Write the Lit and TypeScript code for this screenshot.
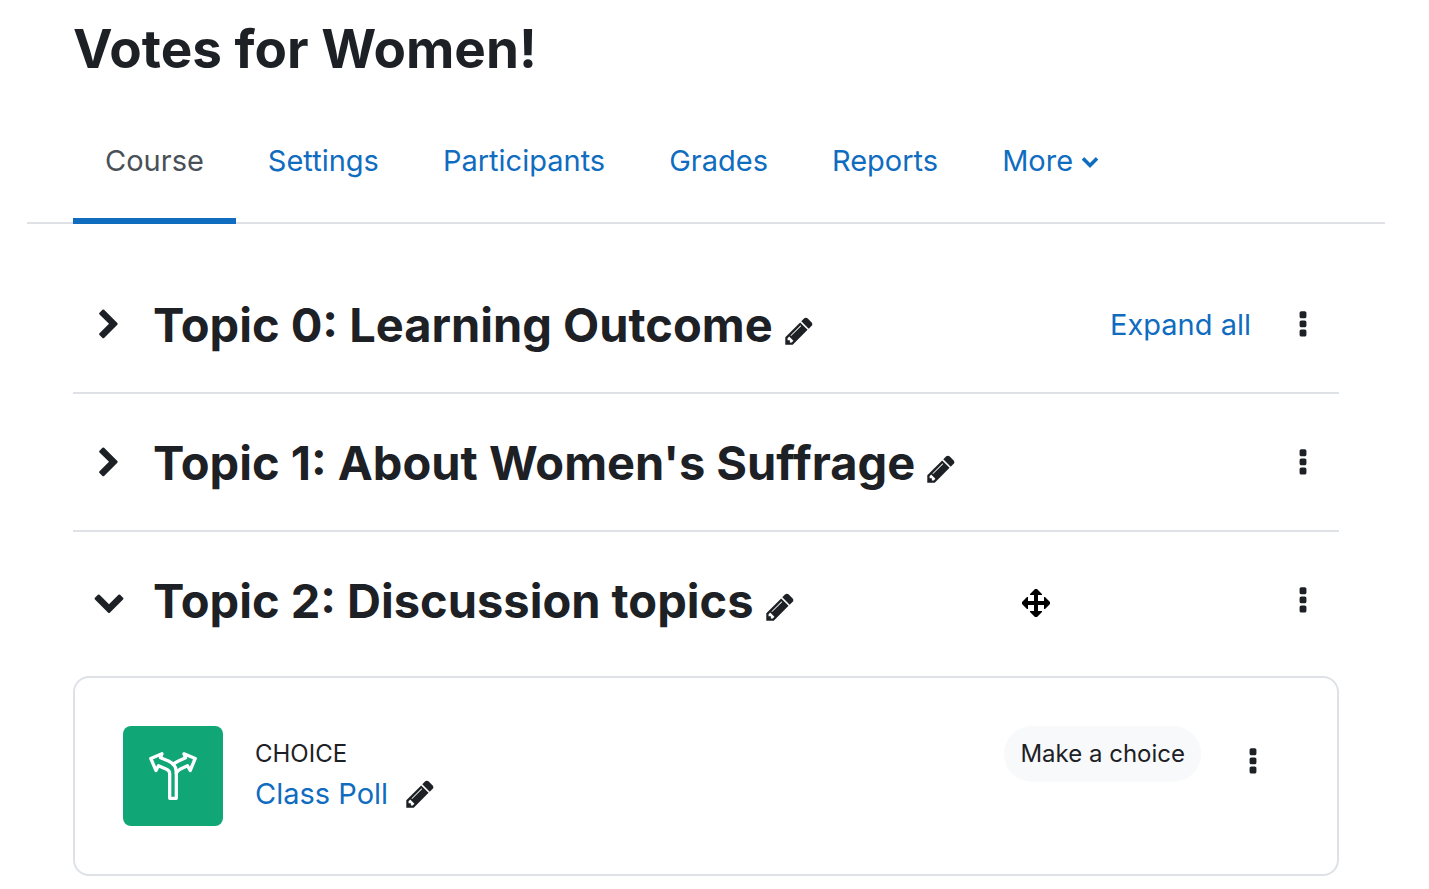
import { LitElement, html, css, svg } from "lit";
import { customElement, property, state } from "lit/decorators.js";
import { classMap } from "lit/directives/class-map.js";

const ICONS = {
  "chevron-right":
    "M1363 877l-742 742q-19 19-45 19t-45-19l-166-166q-19-19-19-45t19-45l531-531-531-531q-19-19-19-45t19-45l166-166q19-19 45-19t45 19l742 742q19 19 19 45t-19 45z",
  "chevron-down":
    "M1683 808l-742 741q-19 19-45 19t-45-19l-742-741q-19-19-19-45.5t19-45.5l166-165q19-19 45-19t45 19l531 531 531-531q19-19 45-19t45 19l166 165q19 19 19 45.5t-19 45.5z",
  pencil:
    "M491 1536l91-91-235-235-91 91v107h128v128h107zm523-928q0-22-22-22-10 0-17 7l-542 542q-7 7-7 17 0 22 22 22 10 0 17-7l542-542q7-7 7-17zm-54-192l416 416-832 832h-416v-416zm683 96q0 53-37 90l-166 166-416-416 166-165q36-38 90-38 53 0 91 38l235 234q37 39 37 91z",
  "ellipsis-v":
    "M1088 1248v192q0 40-28 68t-68 28h-192q-40 0-68-28t-28-68v-192q0-40 28-68t68-28h192q40 0 68 28t28 68zm0-512v192q0 40-28 68t-68 28h-192q-40 0-68-28t-28-68v-192q0-40 28-68t68-28h192q40 0 68 28t28 68zm0-512v192q0 40-28 68t-68 28h-192q-40 0-68-28t-28-68v-192q0-40 28-68t68-28h192q40 0 68 28t28 68z",
};

@customElement("ui-icon")
class UiIcon extends LitElement {
  @property() name: keyof typeof ICONS = "pencil";

  static styles = css`
    :host {
      display: inline-flex;
      width: 32px;
      height: 32px;
    }
    .glyph {
      width: 100%;
      height: 100%;
      fill: currentColor;
    }
  `;

  render() {
    return html`<svg class="glyph" viewBox="0 0 1792 1792" aria-hidden="true">
      ${svg`<path d=${ICONS[this.name]}></path>`}
    </svg>`;
  }
}

interface Topic {
  title: string;
  open: boolean;
}

@customElement("app-root")
class AppRoot extends LitElement {
  @state() private topics: Topic[] = [
    { title: "Topic 0: Learning Outcome", open: false },
    { title: "Topic 1: About Women's Suffrage", open: false },
    { title: "Topic 2: Discussion topics", open: true },
  ];

  static styles = css`
    :host {
      display: block;
      position: relative;
      box-sizing: border-box;
      padding: 0 44px 0 27px;
      background: #fff;
      color: #1d2125;
      font: 400 29px/44px Inter, "Liberation Sans", sans-serif;
    }
    *,
    *::before,
    *::after {
      box-sizing: border-box;
    }
    h1,
    h2,
    ul,
    p {
      margin: 0;
      padding: 0;
    }
    ul {
      list-style: none;
    }
    a {
      color: #0f6cbf;
      text-decoration: none;
    }
    button {
      display: inline-flex;
      align-items: center;
      padding: 0;
      border: 0;
      background: none;
      color: inherit;
      font: inherit;
      cursor: pointer;
    }
    .title {
      padding: 15px 46px 0;
      font-size: 53px;
      line-height: 68px;
      font-weight: 700;
    }
    .tabs {
      display: flex;
      margin-top: 15px;
      padding: 0 46px;
      border-bottom: 2px solid #dee2e6;
    }
    .tab {
      display: flex;
      align-items: center;
      gap: 8px;
      height: 126px;
      margin-bottom: -2px;
      padding: 5px 32px 0;
      border-bottom: 6px solid transparent;
      color: #0f6cbf;
    }
    .tab.active {
      border-color: #0f6cbf;
      color: #495057;
    }
    .caret {
      width: 18px;
      height: 18px;
    }
    .course {
      padding: 32px 46px 0;
    }
    .topic + .topic {
      border-top: 2px solid #dee2e6;
    }
    .bar {
      display: flex;
      align-items: center;
      height: 136px;
      padding: 1px 20px 0 0;
    }
    .toggle {
      width: 80px;
      padding-left: 20px;
    }
    .heading {
      font-size: 47px;
      line-height: 60px;
      font-weight: 700;
    }
    .edit {
      margin: 12px 0 0 10px;
    }
    .tools {
      display: flex;
      align-items: center;
      gap: 36px;
      margin-left: auto;
    }
    .card {
      display: flex;
      align-items: flex-start;
      gap: 32px;
      min-height: 200px;
      margin-top: 8px;
      padding: 48px;
      border: 2px solid #dee2e6;
      border-radius: 16px;
    }
    .badge {
      display: flex;
      padding: 25px;
      border-radius: 8px;
      background: #11a676;
    }
    .badge svg {
      width: 50px;
      height: 50px;
    }
    .kind {
      margin-top: 8px;
      font-size: 24px;
      line-height: 40px;
    }
    .name {
      display: flex;
      align-items: center;
      gap: 16px;
      line-height: 40px;
    }
    .pill {
      margin-left: auto;
      height: 56px;
      padding: 0 16px;
      border-radius: 28px;
      background: #f8f9fa;
      font-size: 24px;
    }
    .card-menu {
      margin: 20px 20px 0 4px;
    }
    .move {
      position: absolute;
      left: 1020px;
      top: 587px;
      width: 32px;
      height: 32px;
    }
  `;

  private toggle(index: number) {
    this.topics = this.topics.map((t, i) => (i === index ? { ...t, open: !t.open } : t));
  }

  private expandAll() {
    this.topics = this.topics.map((t) => ({ ...t, open: true }));
  }

  private renderChoice() {
    return html`<article class="card">
      <span class="badge">
        <svg viewBox="0 0 50 50" fill="none" stroke="#fff" stroke-width="3.3" stroke-linejoin="round" stroke-linecap="round" aria-hidden="true">
          <path
            d="M2.8 7.5L14 2.8L12.600 6.800L20.500 10Q28.300 13.500 28.300 21.500V47.300H21.700V22.500Q21.700 19.500 18 18L10.500 14.800L8 19.500Z"
          />
          <path d="M25.300 13.500Q27 11.500 30.500 10L37.600 6.800L36 2.800L47.200 7.500L42.200 19.500L39.500 14.800L32.500 18Q29.500 19.500 28.300 22" />
        </svg>
      </span>
      <div>
        <p class="kind">CHOICE</p>
        <div class="name">
          <a href="#poll">Class Poll</a>
          <button aria-label="Edit Class Poll"><ui-icon name="pencil"></ui-icon></button>
        </div>
      </div>
      <button class="pill">Make a choice</button>
      <button class="card-menu" aria-label="Class Poll menu"><ui-icon name="ellipsis-v"></ui-icon></button>
    </article>`;
  }

  render() {
    const tabs = ["Course", "Settings", "Participants", "Grades", "Reports", "More"];
    return html`
      <h1 class="title">Votes for Women!</h1>
      <nav class="tabs">
        ${tabs.map(
          (tab, i) => html`<a class=${classMap({ tab: true, active: i === 0 })} href="#${tab.toLowerCase()}"
            >${tab}${tab === "More" ? html`<ui-icon class="caret" name="chevron-down"></ui-icon>` : ""}</a
          >`,
        )}
      </nav>
      <ul class="course">
        ${this.topics.map(
          (topic, i) => html`<li class="topic">
            <div class="bar">
              <button
                class="toggle"
                aria-label="Toggle ${topic.title}"
                aria-expanded=${topic.open}
                @click=${() => this.toggle(i)}
              >
                <ui-icon name=${topic.open ? "chevron-down" : "chevron-right"}></ui-icon>
              </button>
              <h2 class="heading">${topic.title}</h2>
              <button class="edit" aria-label="Edit ${topic.title}"><ui-icon name="pencil"></ui-icon></button>
              <div class="tools">
                ${i === 0 ? html`<a href="#all" @click=${this.expandAll}>Expand all</a>` : ""}
                <button aria-label="${topic.title} menu"><ui-icon name="ellipsis-v"></ui-icon></button>
              </div>
            </div>
            ${i === 2 && topic.open ? this.renderChoice() : ""}
          </li>`,
        )}
      </ul>
      <svg class="move" viewBox="-16 -16 32 32" aria-hidden="true">
        <path
          d="M-1-14h2l5 5v1h-4v6h6v-4h1l5 5v2l-5 5h-1v-4h-6v6h4v1l-5 5h-2l-5-5v-1h4v-6h-6v4h-1l-5-5v-2l5-5h1v4h6v-6h-4v-1z"
        />
      </svg>
    `;
  }
}
